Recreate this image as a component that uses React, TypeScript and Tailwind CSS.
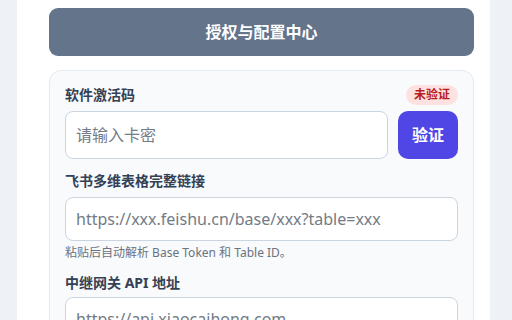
import { useState } from "react";

export default function App() {
   const [code, setCode] = useState("");
   const [link, setLink] = useState("");
   const [gateway, setGateway] = useState("");

   return (
      <div className="min-h-screen h-[320px] overflow-hidden bg-[#eef2f7] font-['Noto_Sans','Noto_Sans_CJK_SC',sans-serif]">
         <div className="ml-[17px] w-[473px] h-full bg-white pl-8 pr-4 pt-2">
            <div className="h-12 rounded-[9px] bg-[#64748b] flex items-center justify-center text-white text-base font-bold">
               授权与配置中心
            </div>
            <section className="mt-3.5 rounded-xl border border-[#e5e9f0] bg-[#f8fafc] px-[15px] pt-[14px] pb-4">
               <div className="flex h-5 items-center justify-between">
                  <label className="text-sm font-bold text-[#334155]">软件激活码</label>
                  <span className="rounded-full bg-[#fee2e2] px-2 py-0.5 text-xs font-bold leading-4 text-[#b91c1c]">未验证</span>
               </div>
               <div className="mt-1.5 flex gap-2.5">
                  <input
                     value={code}
                     onChange={(e) => setCode(e.target.value)}
                     placeholder="请输入卡密"
                     className="h-12 flex-1 rounded-lg border border-[#cbd5e1] bg-white px-2.5 text-base text-[#334155] placeholder:text-[#737b86] outline-none"
                  />
                  <button className="h-12 w-[60px] rounded-[10px] bg-[#4f46e5] text-base font-bold text-white">验证</button>
               </div>

               <label className="mt-3 block text-sm font-bold leading-5 text-[#334155]">飞书多维表格完整链接</label>
               <input
                  value={link}
                  onChange={(e) => setLink(e.target.value)}
                  placeholder="https://xxx.feishu.cn/base/xxx?table=xxx"
                  className="mt-1.5 h-11 w-full rounded-lg border border-[#cbd5e1] bg-white px-2.5 text-base text-[#334155] placeholder:text-[#737b86] outline-none"
               />
               <p className="mt-1 text-xs leading-4 text-[#6b7280]">粘贴后自动解析 Base Token 和 Table ID。</p>

               <label className="mt-3 block text-sm font-bold leading-5 text-[#334155]">中继网关 API 地址</label>
               <input
                  value={gateway}
                  onChange={(e) => setGateway(e.target.value)}
                  placeholder="https://api.xiaocaihong.com"
                  className="mt-1 h-11 w-full rounded-lg border border-[#cbd5e1] bg-white px-2.5 text-base text-[#334155] placeholder:text-[#737b86] outline-none"
               />
            </section>
         </div>
      </div>
   );
}
